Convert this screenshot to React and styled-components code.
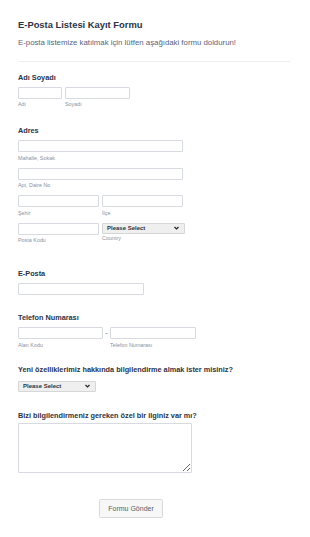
import styled, { createGlobalStyle } from "styled-components";

const Global = createGlobalStyle`
	body {
		margin: 0;
		background: #fff;
		font-family: "Liberation Sans", Arial, sans-serif;
	}
	* {
		box-sizing: border-box;
	}
`;

function Chevron() {
	return (
		<svg width="5" height="4" viewBox="0 0 10 7">
			<path d="M1 1.5 L5 5.5 L9 1.5" fill="none" stroke="#222" strokeWidth="2.4" />
		</svg>
	);
}

function Select({ width }) {
	return (
		<SelectBox $width={width} role="combobox" tabIndex={0}>
			<span>Please Select</span>
			<Chevron />
		</SelectBox>
	);
}

function App() {
	return (
		<Page>
			<Global />
			<Title>E-Posta Listesi Kayıt Formu</Title>
			<Subtitle>E-posta listemize katılmak için lütfen aşağıdaki formu doldurun!</Subtitle>
			<Divider />

			<Field $top={11}>
				<Label>Adı Soyadı</Label>
				<Row $gap={3}>
					<Cell>
						<Input $width={44} />
						<SubLabel>Adı</SubLabel>
					</Cell>
					<Cell>
						<Input $width={65} />
						<SubLabel>Soyadı</SubLabel>
					</Cell>
				</Row>
			</Field>

			<Field $top={18}>
				<Label>Adres</Label>
				<Stack>
					<Cell>
						<Input $width={165} />
						<SubLabel>Mahalle, Sokak</SubLabel>
					</Cell>
					<Cell>
						<Input $width={165} />
						<SubLabel>Apt, Daire No</SubLabel>
					</Cell>
					<Row $gap={3}>
						<Cell>
							<Input $width={81} />
							<SubLabel>Şehir</SubLabel>
						</Cell>
						<Cell>
							<Input $width={81} />
							<SubLabel>İlçe</SubLabel>
						</Cell>
					</Row>
					<Row $gap={3}>
						<Cell>
							<Input $width={81} />
							<SubLabel>Posta Kodu</SubLabel>
						</Cell>
						<Cell>
							<Select width={83} />
							<SubLabel $tight>Country</SubLabel>
						</Cell>
					</Row>
				</Stack>
			</Field>

			<Field $top={25}>
				<Label>E-Posta</Label>
				<Input $width={126} />
			</Field>

			<Field $top={18}>
				<Label>Telefon Numarası</Label>
				<Row $gap={0}>
					<Cell>
						<Input $width={85} />
						<SubLabel>Alan Kodu</SubLabel>
					</Cell>
					<Dash>-</Dash>
					<Cell>
						<Input $width={86} />
						<SubLabel>Telefon Numarası</SubLabel>
					</Cell>
				</Row>
			</Field>

			<Field $top={16}>
				<Label $gap={6}>Yeni özelliklerimiz hakkında bilgilendirme almak ister misiniz?</Label>
				<Select width={78} />
			</Field>

			<Field $top={18.5}>
				<Label $gap={2.5}>Bizi bilgilendirmeniz gereken özel bir ilginiz var mı?</Label>
				<TextArea />
			</Field>

			<Actions>
				<SubmitButton type="button">Formu Gönder</SubmitButton>
			</Actions>
		</Page>
	);
}

const Page = styled.div`
	width: 310px;
	min-height: 537px;
	padding: 19px 20px 0 18px;
	background: #fff;
`;

const Title = styled.h1`
	margin: 0;
	font-size: 9.4px;
	line-height: 12px;
	font-weight: 700;
	color: #2c3345;
`;

const Subtitle = styled.p`
	margin: 6.7px 0 0;
	font-size: 7.8px;
	line-height: 10px;
	color: #57647e;
	white-space: nowrap;
`;

const Divider = styled.hr`
	margin: 13px 0 0;
	border: 0;
	border-top: 1px solid #eceef2;
	width: 272px;
`;

const Field = styled.div`
	margin-top: ${(p) => p.$top}px;
	display: flex;
	flex-direction: column;
	align-items: flex-start;
`;

const Label = styled.label`
	display: block;
	font-size: 7.3px;
	line-height: 10px;
	font-weight: 700;
	color: #2c3345;
	margin-bottom: ${(p) => p.$gap ?? 4}px;
	white-space: nowrap;
`;

const Row = styled.div`
	display: flex;
	align-items: flex-start;
	gap: ${(p) => p.$gap}px;
`;

const Stack = styled.div`
	display: flex;
	flex-direction: column;
	gap: 6px;
`;

const Cell = styled.div`
	display: flex;
	flex-direction: column;
`;

const Input = styled.input`
	display: block;
	width: ${(p) => p.$width}px;
	height: 12px;
	margin: 0;
	padding: 0 2px;
	border: 1px solid #d8dae1;
	border-radius: 1px;
	background: #fff;
	font-size: 6px;
	outline: none;
`;

const SubLabel = styled.span`
	display: block;
	margin-top: ${(p) => (p.$tight ? 1 : 2.5)}px;
	font-size: 5.4px;
	line-height: 7px;
	color: #8d929c;
	white-space: nowrap;
`;

const Dash = styled.span`
	width: 7px;
	text-align: center;
	font-size: 7px;
	line-height: 12px;
	color: #57647e;
`;

const SelectBox = styled.div`
	display: flex;
	align-items: center;
	justify-content: space-between;
	width: ${(p) => p.$width}px;
	height: 11.5px;
	padding: 0 5px 0 4px;
	border: 1px solid #d6d6d6;
	border-radius: 1px;
	background: #efefef;
	font-size: 6px;
	font-weight: 700;
	color: #333;
	cursor: default;
	span {
		line-height: 1;
	}
`;

const TextArea = styled.textarea`
	display: block;
	width: 174px;
	height: 50px;
	margin: 0;
	padding: 2px;
	border: 1px solid #d8dae1;
	border-radius: 1px;
	font-size: 6px;
	outline: none;
`;

const Actions = styled.div`
	display: flex;
	padding-left: 81px;
	margin-top: 26px;
`;

const SubmitButton = styled.button`
	width: 64px;
	height: 19px;
	padding: 0;
	border: 1px solid #d9d9d9;
	border-radius: 1.5px;
	background: #f7f7f7;
	font-family: "Liberation Sans", Arial, sans-serif;
	font-size: 7px;
	color: #555c68;
	cursor: pointer;
`;

export default App;
